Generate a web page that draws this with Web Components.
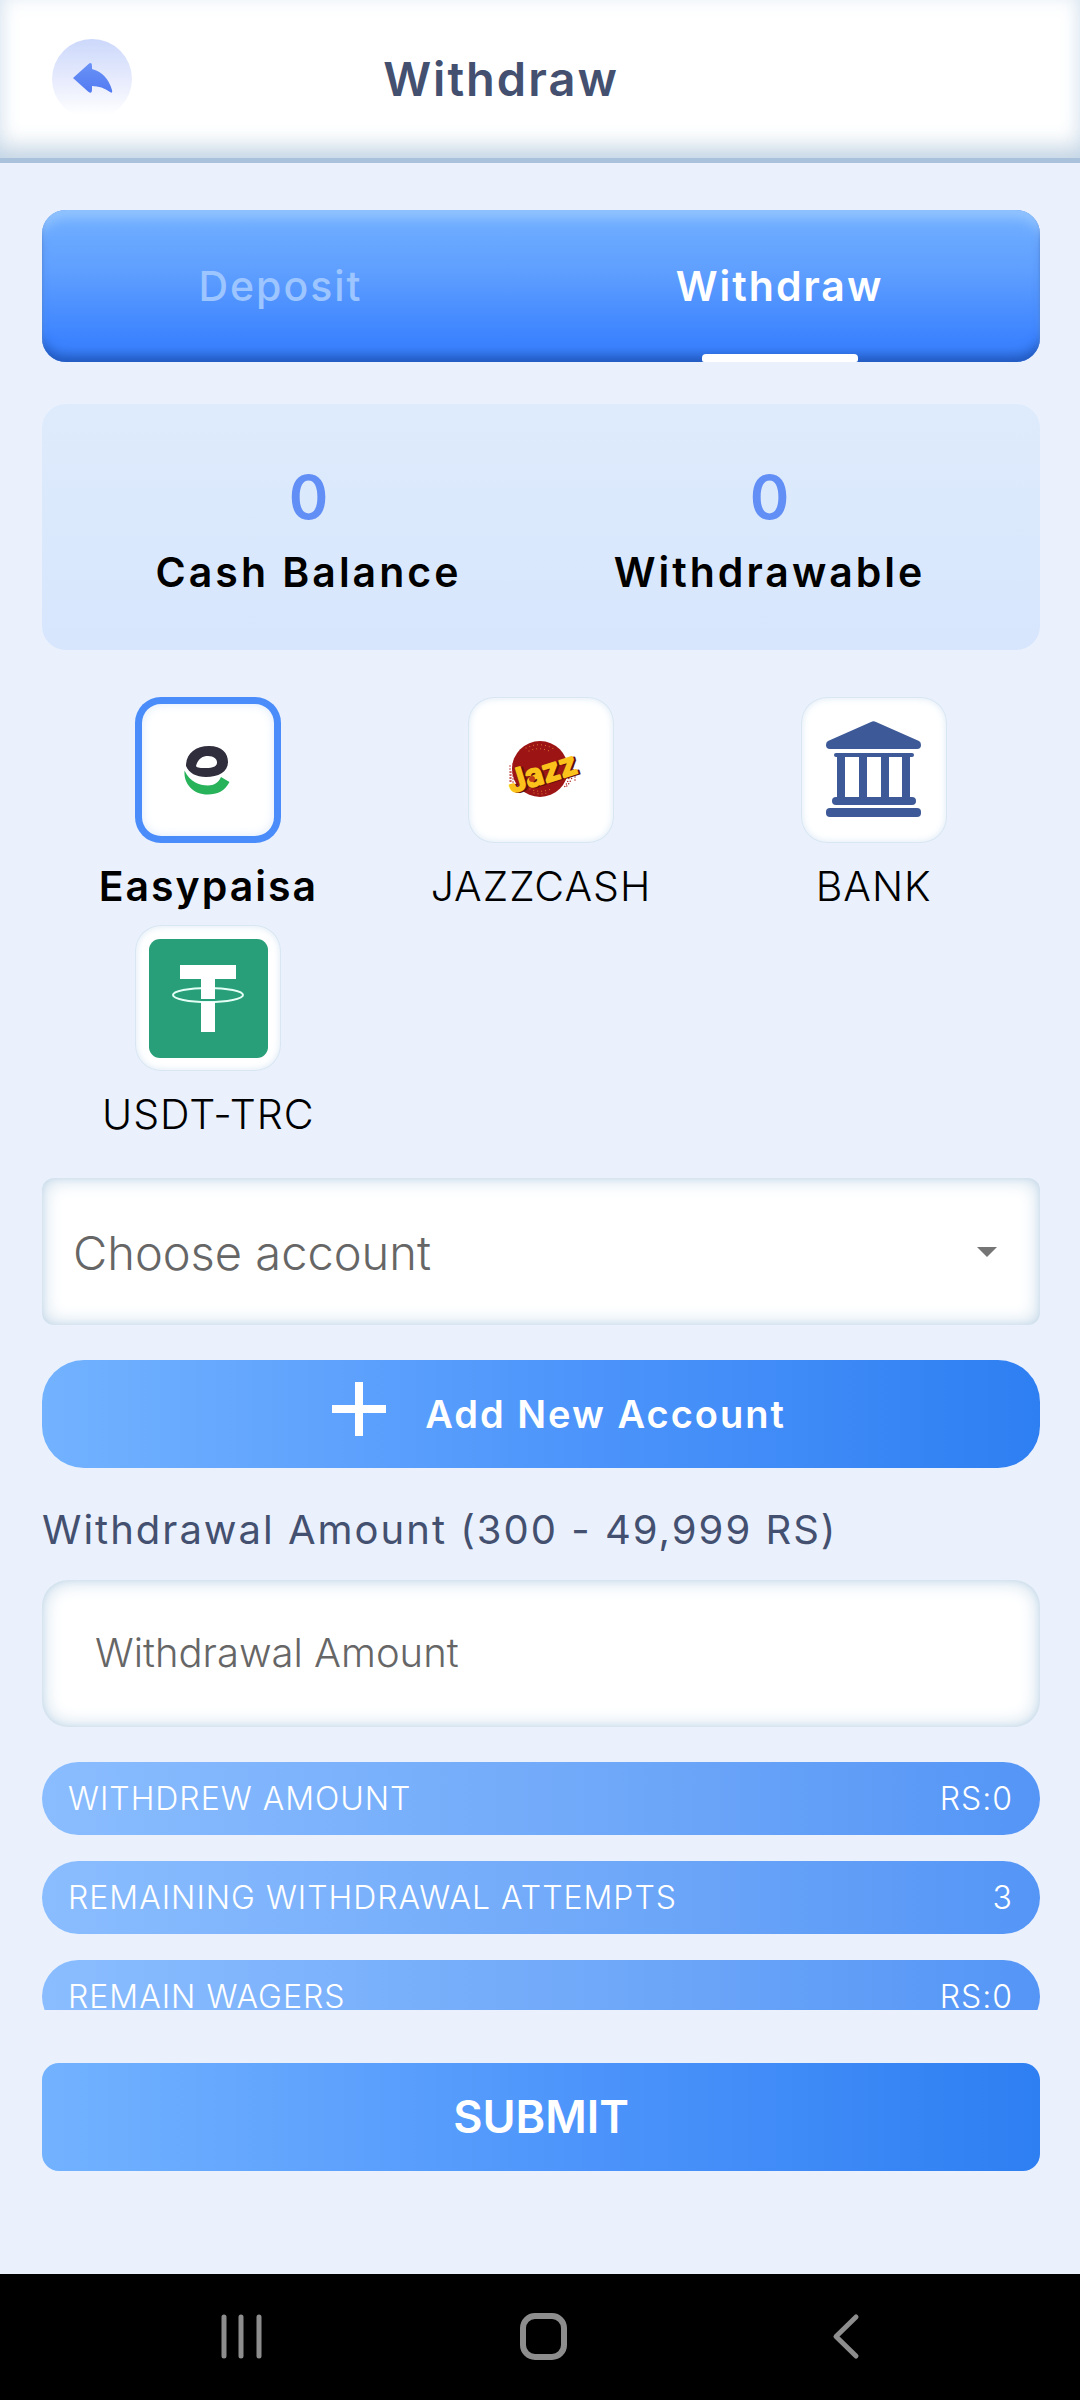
<!DOCTYPE html>
<html lang="en">
<head>
<meta charset="utf-8">
<meta name="viewport" content="width=device-width, initial-scale=1">
<title>Withdraw</title>
<style>
  html, body { margin: 0; height: 100%; }
  body {
    background: #eaf1fd;
    color: #000;
    font-family: Inter, "Open Sans", "Liberation Sans", sans-serif;
    font-size: 41px;
  }
</style>
</head>
<body>
<withdraw-screen>
  <app-bar slot="header">Withdraw</app-bar>
  <tab-bar></tab-bar>
  <balance-card>
    <balance-item value="0">Cash Balance</balance-item>
    <balance-item value="0">Withdrawable</balance-item>
  </balance-card>
  <payment-methods></payment-methods>
  <account-select></account-select>
  <add-button>Add New Account</add-button>
  <amount-field></amount-field>
  <info-list>
    <info-row value="RS:0">WITHDREW AMOUNT</info-row>
    <info-row value="3">REMAINING WITHDRAWAL ATTEMPTS</info-row>
    <info-row value="RS:0">REMAIN WAGERS</info-row>
  </info-list>
  <submit-button slot="footer">SUBMIT</submit-button>
  <system-nav slot="nav"></system-nav>
</withdraw-screen>

<script>
const define = (name, html, setup) => {
  const template = document.createElement('template');
  template.innerHTML = html;
  customElements.define(name, class extends HTMLElement {
    constructor() {
      super();
      this.attachShadow({ mode: 'open' }).append(template.content.cloneNode(true));
    }
    connectedCallback() { if (setup) setup(this, this.shadowRoot); }
  });
};

define('withdraw-screen', `
  <style>
    :host { display: flex; flex-direction: column; height: 100vh; }
    main {
      flex: 1; min-height: 0; overflow-y: auto; scrollbar-width: none;
      padding: 47px 40px 0 42px; display: flex; flex-direction: column;
    }
    main ::slotted(*) { flex: none; }
    footer { padding: 53px 40px 103px 42px; }
  </style>
  <slot name="header"></slot>
  <main><slot></slot></main>
  <footer><slot name="footer"></slot></footer>
  <slot name="nav"></slot>`);

define('app-bar', `
  <style>
    :host { display: block; flex: none; }
    header {
      display: grid; grid-template-columns: 80px 1fr 210px; align-items: center;
      height: 158px; padding: 0 0 0 52px; background: #fff; border-bottom: 5px solid #a9c1db;
      box-shadow: inset 0 -4px 20px rgba(180,203,228,.45), inset 0 -20px 24px -10px #cbd9e5;
    }
    button {
      width: 80px; height: 80px; padding: 0; border: 0; border-radius: 50%; cursor: pointer;
      background: linear-gradient(#ccd8fb, #e9edfd 55%, #fff 95%);
    }
    svg { display: block; }
    h1 {
      margin: 0; text-align: center; font-size: 47px; line-height: 60px;
      font-weight: 600; letter-spacing: 2px; color: #44506f;
    }
  </style>
  <header>
    <button type="button" aria-label="Back">
      <svg width="80" height="80" viewBox="0 0 80 80">
        <defs><linearGradient id="g" x1="0" y1="0" x2="0" y2="1">
          <stop offset="0" stop-color="#6a92f6"/><stop offset="1" stop-color="#527bf2"/>
        </linearGradient></defs>
        <path fill="url(#g)" d="M21 39 36 25.500Q40 22 40 27V30Q55 34 60 51Q61 55 58 53Q50 47 40 47V51Q40 55.500 36 52.500Z"/>
      </svg>
    </button>
    <h1><slot></slot></h1>
  </header>`);

define('tab-bar', `
  <style>
    :host { display: block; }
    nav {
      display: grid; grid-template-columns: 1fr 1fr; height: 152px; border-radius: 24px; overflow: hidden;
      background: linear-gradient(#72b0ff, #5f9fff 40%, #3c83ff 85%);
      box-shadow: inset 0 14px 12px -6px #93c4ff, inset 0 -12px 12px -5px #2058bd, inset 0 0 3px #4d7fd0;
    }
    a {
      display: flex; flex-direction: column; align-items: center; justify-content: space-between;
      padding-right: 22px; text-decoration: none; color: #9dc5ff;
      font-size: 41px; line-height: 54px; font-weight: 500; letter-spacing: 2px;
    }
    a::before { content: ""; height: 49px; }
    a::after { content: ""; width: 156px; height: 8px; border-radius: 4px 4px 2px 2px; }
    a[aria-current] { color: #fff; font-weight: 600; }
    a[aria-current]::after { background: #fff; }
    span { flex: 1; }
  </style>
  <nav>
    <a href="#deposit"><span>Deposit</span></a>
    <a href="#withdraw" aria-current="page"><span>Withdraw</span></a>
  </nav>`);

define('balance-card', `
  <style>
    :host {
      display: grid; grid-template-columns: 1fr 1fr; margin-top: 42px; padding: 53px 40px 46px 36px;
      border-radius: 24px; background: linear-gradient(#deebfc, #d7e6fd);
    }
  </style>
  <slot></slot>`);

define('balance-item', `
  <style>
    :host { display: block; text-align: center; }
    output { display: block; font-size: 60px; line-height: 80px; font-weight: 600; color: #628ff5; }
    div { font-size: 41px; line-height: 54px; padding-top: 8px; padding-bottom: 5px; font-weight: 600; letter-spacing: 3px; }
  </style>
  <output></output><div><slot></slot></div>`,
  (el, root) => { root.querySelector('output').textContent = el.getAttribute('value'); });

define('payment-methods', `
  <style>
    :host { display: block; margin-top: 47px; }
    fieldset { display: grid; grid-template-columns: repeat(3, 1fr); margin: 0; padding: 0; border: 0; }
    label { display: flex; flex-direction: column; align-items: center; cursor: pointer; position: relative; }
    input { position: absolute; opacity: 0; }
    .tile {
      width: 146px; height: 146px; border-radius: 26px; background: #fff; margin-bottom: 4px;
      box-shadow: inset 0 0 8px #d3e3f2, inset 0 0 0 1px #dde9f5;
    }
    svg { display: block; }
    input:checked + .tile { box-shadow: inset 0 0 0 7px #4a8cf9, inset 0 0 14px 3px #c5dcf8; }
    .name { font-size: 41px; line-height: 78px; font-weight: 300; letter-spacing: 1px; }
    input:checked ~ .name { font-weight: 600; letter-spacing: 2px; }
  </style>
  <fieldset aria-label="Payment method">
    <label><input type="radio" name="method" checked>
      <span class="tile"><svg width="146" height="146" viewBox="0 0 146 146">
        <path fill="#302d3d" fill-rule="evenodd" d="M51 69C51 57 60 49 74 49C87 49 93 56 93 65C93 75 83 80 71 80C61 80 54 76 51 69ZM61 69C63 62 67 59 73 59C79 59 82 62 82 65.500C82 69.500 78 71 71 71C66 71 62 71 61 69Z"/>
        <path fill="#28b25a" d="M49.500 73.500C55 85 64 88.500 73 88.500C79 88.500 84 85 86 80L94.500 85C90 94 82 97.500 73 97.500C58 97.500 48.500 87 49.500 73.500Z"/>
      </svg></span>
      <span class="name">Easypaisa</span></label>
    <label><input type="radio" name="method">
      <span class="tile"><svg width="146" height="146" viewBox="0 0 146 146">
        <circle cx="72" cy="72" r="28" fill="#9c1414"/>
        <g fill="none" stroke-linecap="round">
          <path stroke="#e8903a" stroke-width="1" stroke-dasharray="0 4" d="M58 51Q72 44 86 52M61 54Q72 49 83 55M62 92Q73 97 85 91M66 96Q73 98 79 96"/>
          <path stroke="#b32020" stroke-width="1.500" stroke-dasharray="0 3" d="M42 69V86M45 67V90M100 64Q106 78 95 92M103 64Q109 78 98 90M107 77V84M43 75V85"/>
        </g>
        <g transform="rotate(-17 72 74)" font-family="Inter, sans-serif" font-weight="600" font-size="31" stroke-linejoin="round" stroke-width="2">
          <text x="40" y="88" fill="#5e1208" stroke="#5e1208">Jazz</text>
          <text x="38" y="87" fill="#fbc21c" stroke="#fbc21c">Jazz</text>
        </g>
        <circle cx="64" cy="82" r="3" fill="#c33d14"/>
      </svg></span>
      <span class="name">JAZZCASH</span></label>
    <label><input type="radio" name="method">
      <span class="tile"><svg width="146" height="146" viewBox="0 0 146 146" fill="#3d5997">
        <path d="M70 25Q72.500 23.500 75 25L118 44Q120 45 120 48Q120 52 116 52H29Q25 52 25 48Q25 45 27 44Z"/>
        <rect x="33" y="56" width="80" height="4" rx="2"/>
        <path d="M36 59H44V101H36ZM58 59H66V101H58ZM80 59H88V101H80ZM101 59H109V101H101Z"/>
        <rect x="31" y="100" width="84" height="8" rx="4"/>
        <rect x="25" y="111" width="95" height="9" rx="4"/>
      </svg></span>
      <span class="name">BANK</span></label>
    <label><input type="radio" name="method">
      <span class="tile"><svg width="146" height="146" viewBox="0 0 146 146">
        <rect x="14" y="14" width="119" height="119" rx="11" fill="#289f78"/>
        <ellipse cx="73" cy="70" rx="35" ry="7" fill="none" stroke="#e4fff5" stroke-width="2"/>
        <path fill="#fff" d="M45 40H101V54H80V74H66V54H45ZM66 77H80V107H66Z"/>
      </svg></span>
      <span class="name">USDT-TRC</span></label>
  </fieldset>`);

define('account-select', `
  <style>
    :host { display: grid; margin-top: 25px; }
    select {
      grid-area: 1 / 1; width: 100%; height: 147px; padding: 2px 90px 0 31px; border: 0; border-radius: 12px;
      appearance: none; background: #fff; color: #666;
      font: 300 47px/60px Inter, "Open Sans", sans-serif;
      box-shadow: inset 0 0 20px #c3d7e8, inset 0 0 6px #cfe0ee;
    }
    svg { grid-area: 1 / 1; align-self: center; justify-self: end; margin-right: 43px; pointer-events: none; }
  </style>
  <select aria-label="Choose account"><option>Choose account</option></select>
  <svg width="20" height="10" viewBox="0 0 20 10"><path fill="#757575" d="M0 0H20L10 10Z"/></svg>`);

define('add-button', `
  <style>
    :host { display: block; margin-top: 35px; }
    button {
      display: flex; align-items: center; justify-content: center; gap: 39px; width: 100%; height: 108px;
      border: 0; border-radius: 42px; padding: 0 0 0 36px; color: #fff; cursor: pointer;
      background: linear-gradient(to right, #72b2ff, #4c94fb 55%, #2e7ff2);
      font: 600 38px/50px Inter, "Open Sans", sans-serif; letter-spacing: 2px;
    }
    svg { margin-bottom: 10px; }
  </style>
  <button type="button">
    <svg width="54" height="54" viewBox="0 0 54 54"><path fill="#fff" d="M23 0H31V23H54V31H31V54H23V31H0V23H23Z"/></svg>
    <span><slot></slot></span>
  </button>`);

define('amount-field', `
  <style>
    :host { display: block; margin-top: 35px; }
    label { display: block; font-size: 40px; line-height: 54px; font-weight: 400; letter-spacing: 2px; color: #44506f; }
    input {
      box-sizing: border-box; display: block; width: 100%; height: 147px; margin-top: 23px; padding: 0 53px 2px;
      border: 0; border-radius: 26px; background: #fff; color: #333;
      font: 300 40px/54px Inter, "Open Sans", sans-serif;
      box-shadow: inset 0 0 20px #c3d7e8, inset 0 0 6px #cfe0ee;
    }
    input::placeholder { color: #666; opacity: 1; }
  </style>
  <label for="amount">Withdrawal Amount (300 - 49,999 RS)</label>
  <input id="amount" type="text" inputmode="numeric" placeholder="Withdrawal Amount">`);

define('info-list', `
  <style>
    :host { display: flex; flex-direction: column; gap: 26px; margin-top: 35px; }
  </style>
  <slot></slot>`);

define('info-row', `
  <style>
    :host {
      display: flex; justify-content: space-between; padding: 0 27px 0 26px; border-radius: 37px;
      background: linear-gradient(to right, #8abdff, #70a9f9 55%, #5495f6);
      color: #fff; font-size: 32px; line-height: 73px; font-weight: 300; letter-spacing: 1px;
    }
  </style>
  <span><slot></slot></span><output></output>`,
  (el, root) => { root.querySelector('output').textContent = el.getAttribute('value'); });

define('submit-button', `
  <style>
    :host { display: block; }
    button {
      display: block; width: 100%; height: 108px; border: 0; border-radius: 17px; padding: 0; color: #fff; cursor: pointer;
      background: linear-gradient(to right, #72b2ff, #4c94fb 55%, #2e7ff2);
      font: 600 45px/60px Inter, "Open Sans", sans-serif;
    }
  </style>
  <button type="submit"><slot></slot></button>`);

define('system-nav', `
  <style>
    :host { display: block; flex: none; background: #000; }
    nav { display: flex; justify-content: space-between; align-items: center; height: 126px; padding: 0 211px; }
    button { border: 0; padding: 0; background: none; width: 60px; height: 60px; }
    svg { display: block; }
  </style>
  <nav aria-label="System">
    <button type="button" aria-label="Recent apps"><svg width="60" height="60" viewBox="0 0 60 60"><path stroke="#8d8d8d" stroke-width="5" stroke-linecap="round" d="M13 10V49M30 10V49M48 10V49"/></svg></button>
    <button type="button" aria-label="Home"><svg width="60" height="60" viewBox="0 0 60 60"><rect x="13" y="9" width="41" height="41" rx="12" fill="none" stroke="#8d8d8d" stroke-width="6"/></svg></button>
    <button type="button" aria-label="Back"><svg width="60" height="60" viewBox="0 0 60 60"><path fill="none" stroke="#8d8d8d" stroke-width="5" stroke-linecap="round" stroke-linejoin="round" d="M47 10 27 29.500 47 49"/></svg></button>
  </nav>`);
</script>
</body>
</html>
